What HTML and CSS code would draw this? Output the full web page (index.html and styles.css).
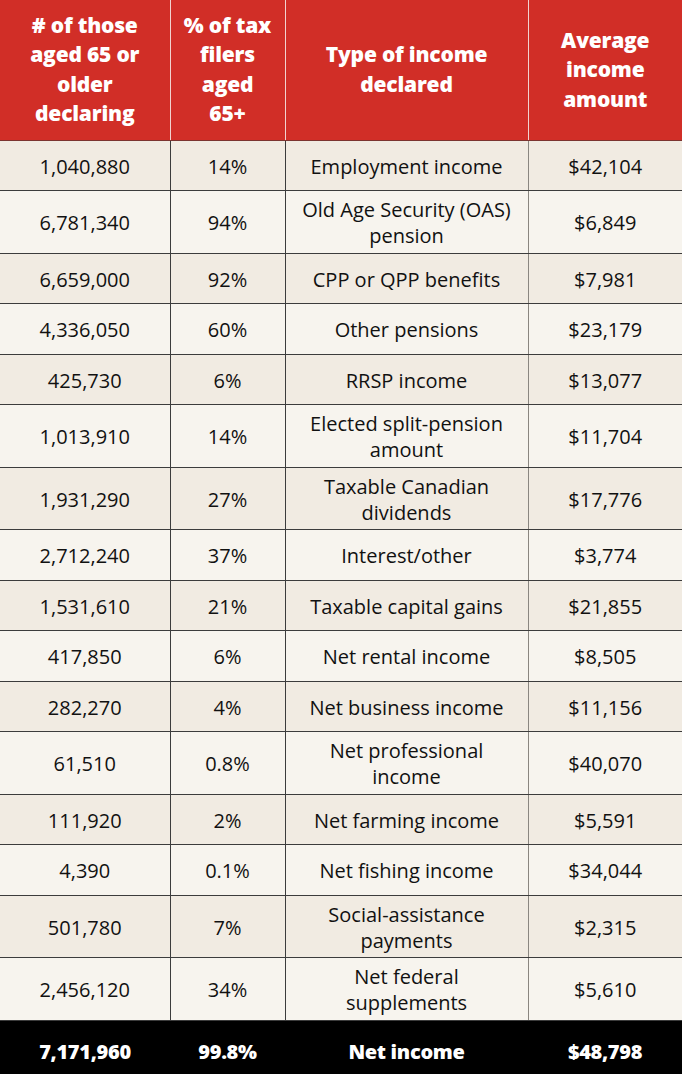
FILE: index.html
```html
<!DOCTYPE html>
<html lang="en">
<head>
<meta charset="utf-8">
<title>Income of tax filers aged 65+</title>
<link rel="stylesheet" href="styles.css">
</head>
<body>
<table class="tbl">
  <colgroup>
    <col class="c1"><col class="c2"><col class="c3"><col class="c4">
  </colgroup>
  <thead>
    <tr class="head">
      <th># of those aged 65 or older declaring</th>
      <th>% of tax filers aged 65+</th>
      <th>Type of income declared</th>
      <th>Average income amount</th>
    </tr>
  </thead>
  <tbody>
    <tr class="odd"><td>1,040,880</td><td>14%</td><td>Employment income</td><td>$42,104</td></tr>
    <tr class="even dbl"><td>6,781,340</td><td>94%</td><td>Old Age Security (OAS) pension</td><td>$6,849</td></tr>
    <tr class="odd"><td>6,659,000</td><td>92%</td><td>CPP or QPP benefits</td><td>$7,981</td></tr>
    <tr class="even"><td>4,336,050</td><td>60%</td><td>Other pensions</td><td>$23,179</td></tr>
    <tr class="odd"><td>425,730</td><td>6%</td><td>RRSP income</td><td>$13,077</td></tr>
    <tr class="even dbl"><td>1,013,910</td><td>14%</td><td>Elected split-pension amount</td><td>$11,704</td></tr>
    <tr class="odd dbl"><td>1,931,290</td><td>27%</td><td>Taxable Canadian dividends</td><td>$17,776</td></tr>
    <tr class="even"><td>2,712,240</td><td>37%</td><td>Interest/other</td><td>$3,774</td></tr>
    <tr class="odd"><td>1,531,610</td><td>21%</td><td>Taxable capital gains</td><td>$21,855</td></tr>
    <tr class="even"><td>417,850</td><td>6%</td><td>Net rental income</td><td>$8,505</td></tr>
    <tr class="odd"><td>282,270</td><td>4%</td><td>Net business income</td><td>$11,156</td></tr>
    <tr class="even dbl"><td>61,510</td><td>0.8%</td><td>Net professional income</td><td>$40,070</td></tr>
    <tr class="odd"><td>111,920</td><td>2%</td><td>Net farming income</td><td>$5,591</td></tr>
    <tr class="even"><td>4,390</td><td>0.1%</td><td>Net fishing income</td><td>$34,044</td></tr>
    <tr class="odd dbl"><td>501,780</td><td>7%</td><td>Social-assistance payments</td><td>$2,315</td></tr>
    <tr class="even dbl"><td>2,456,120</td><td>34%</td><td>Net federal supplements</td><td>$5,610</td></tr>
  </tbody>
  <tfoot>
    <tr class="total"><td>7,171,960</td><td>99.8%</td><td>Net income</td><td>$48,798</td></tr>
  </tfoot>
</table>
</body>
</html>
```

FILE: styles.css
```css
html, body {
  margin: 0;
  padding: 0;
  background: #000000;
}

.tbl {
  width: 682px;
  border-collapse: collapse;
  table-layout: fixed;
  font-family: "Open Sans", "Liberation Sans", sans-serif;
  color: #111111;
}

.c1 { width: 170px; }
.c2 { width: 115px; }
.c3 { width: 243px; }
.c4 { width: 154px; }

.head th {
  background: #d12e27;
  color: #ffffff;
  font-weight: 800;
  font-size: 21px;
  line-height: 29.5px;
  letter-spacing: -0.2px;
  height: 140px;
  padding: 0 12px;
  box-sizing: border-box;
  text-align: center;
  vertical-align: middle;
  border-left: 1px solid #f1d3cf;
  border-bottom: 1px solid #7c3430;
}

.head th:first-child { border-left: none; }

tbody td {
  height: 50.5px;
  padding: 3px 10px 0;
  box-sizing: border-box;
  font-size: 20px;
  font-weight: 500;
  line-height: 26px;
  text-align: center;
  vertical-align: middle;
  border-left: 1px solid #3c3c3c;
  border-bottom: 1px solid #3c3c3c;
}

tbody td:first-child { border-left: none; }
tbody td:nth-child(4) { border-left-color: #8a8680; }

tbody tr.dbl td { height: 62.5px; }

tbody tr.odd td { background: #f1ebe2; }
tbody tr.even td { background: #f7f4ee; }

.total td {
  background: #000000;
  color: #ffffff;
  font-weight: 800;
  font-size: 20px;
  letter-spacing: -0.3px;
  height: 54px;
  padding: 8px 8px 0;
  box-sizing: border-box;
  text-align: center;
  vertical-align: middle;
  border: none;
}
```
